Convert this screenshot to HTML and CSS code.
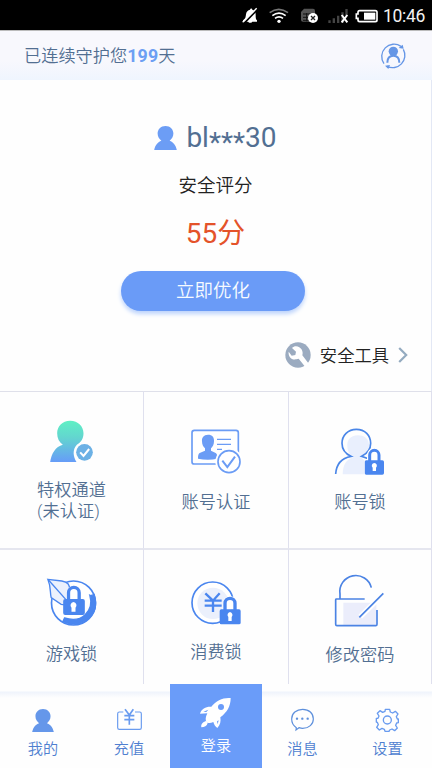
FILE: index.html
```html
<!DOCTYPE html>
<html lang="zh-CN">
<head>
<meta charset="utf-8">
<title>安全中心</title>
<link rel="stylesheet" href="styles.css">
</head>
<body>
<svg class="defs" width="0" height="0" aria-hidden="true">
  <defs>
    <linearGradient id="mint" x1="0" y1="0" x2="0" y2="1"><stop offset="0" stop-color="#5ff0c4"/><stop offset=".4" stop-color="#63d6cf"/><stop offset="1" stop-color="#669cf8"/></linearGradient>
    <symbol id="person" viewBox="0 0 66 70"><path d="M33 0C19 0 10 10 10 22c0 10 5 16 11 21C11 47 3 55 0 70h66c-3-15-11-23-21-27 6-5 11-11 11-21C56 10 47 0 33 0z"/></symbol>
    <symbol id="lock" viewBox="0 0 58 80"><path d="M15 38V20a14 14 0 0 1 28 0v18" fill="none" stroke="#4a86ef" stroke-width="9"/><rect y="36" width="58" height="43" rx="5" fill="#4a86ef"/><path d="M29 44a8 8 0 0 0-5 14v10h10V58a8 8 0 0 0-5-14z" fill="#fff"/></symbol>
  </defs>
</svg>
<header class="status">
  <svg class="status-icons" viewBox="30 0 420 90">
    <path d="M39 61c8-4 8-11 9-18 1-8 6-13 12-14 1-5 6-5 7 0 7 2 10 8 10 15 0 9 0 13 4 17v4H39zM54 65h13q-6 7-13 0z" fill="#fff"/><path d="M42 70 84 27" stroke="#000" stroke-width="5"/><path d="M38 67 80 25" stroke="#fff" stroke-width="4"/>
    <g fill="none" stroke-width="5"><path d="M119 38q27-20 55 0" stroke="#777"/><path d="M127 47q20-15 40 0M135 55q12-9 24 0" stroke="#fff"/></g><circle cx="147" cy="64" r="5" fill="#fff"/>
    <path d="M213 36l9-10h27q6 0 6 6v33h-36q-6 0-6-6z" fill="#555"/><path d="M219 42h27M219 52h27M219 61h20M230 39v25" stroke="#111" stroke-width="3"/><circle cx="249" cy="54" r="15" fill="#fff"/><path d="m243 48 12 12m0-12-12 12" stroke="#222" stroke-width="4"/>
    <path d="M295 61h7v8h-7zM308 55h7v14h-7zM321 47h7v22h-7zM334 37h7v32h-7zM346 27h7v20h-7z" fill="#444"/><path d="m335 45 17 22m0-22-17 22" stroke="#fff" stroke-width="6"/>
    <path d="M389 32h47q5 0 5 5v23q0 5-5 5h-47q-5 0-5-5v-5h-5V42h5v-5q0-5 5-5z" fill="none" stroke="#fff" stroke-width="5"/><path d="M402 38h34v21h-34z" fill="#fff"/>
  </svg>
  <span class="clock">10:46</span>
</header>
<section class="guard">
  <p>已连续守护您<b>199</b>天</p>
  <svg class="switch" viewBox="448 123 84 84">
    <g fill="none" stroke="#6596e6" stroke-width="4"><path d="M463 188A37 37 0 0 1 514 136"/><path d="M521 145A37 37 0 0 1 472 196"/><path d="M473 185c0-14 6-21 18-21s18 7 18 21" stroke-width="6"/></g>
    <circle cx="491" cy="151" r="14" fill="#6596e6"/><path d="m507 141 15 2-3-12zM481 192l-15 2 10 10z" fill="#6596e6"/>
  </svg>
</section>
<main class="score">
  <div class="user"><svg class="user-icon"><use href="#person"/></svg><span>bl<i>***</i>30</span></div>
  <div class="caption">安全评分</div>
  <div class="points">55分</div>
  <button class="optimize">立即优化</button>
  <div class="tools">
    <svg class="wrench" viewBox="44 37 78 78"><circle cx="83" cy="76" r="38" fill="#9babc0"/><path d="M65 55l12 11-2 10-11 2-9-12c-2 14 8 26 23 23l7-2 20 25 11-9-20-26c4-12-4-26-19-27-5 0-8 2-12 5z" fill="#fff"/></svg>
    <span>安全工具</span>
    <svg class="chevron" viewBox="0 0 10 16"><path d="m1.2 1 7 7-7 7" fill="none" stroke="#94abc0" stroke-width="2.2"/></svg>
  </div>
</main>
<section class="grid">
  <div class="cell cell-privilege">
    <svg class="icon" viewBox="136.5 90 156 168"><path fill="url(#mint)" d="M209 92c-24 0-39 17-39 38 0 15 6 27 17 34-22 6-34 26-38 52h79c-10-17-13-37 1-52 12-6 20-18 20-34 0-21-16-38-40-38z"/><circle cx="252" cy="187" r="25" fill="#6cb1e5"/><path d="m239 187 10 11 17-21" fill="none" stroke="#fff" stroke-width="6"/></svg>
    <span>特权通道<br>(未认证)</span>
  </div>
  <div class="cell">
    <svg class="icon" viewBox="138 90 156 168"><rect x="144" y="121" width="139" height="101" rx="7" fill="#fff" stroke="#6b9cf5" stroke-width="5"/><path d="M192 134c-13 0-19 9-18 20 0 10 4 17 9 21v7l-16 7c-4 2-5 8-5 17q30 6 58 0c0-10-1-15-5-17l-14-7v-7c5-4 9-11 9-21 1-12-5-20-18-20z" fill="#6b9cf5"/><path d="M219 148h42M219 163h42M219 178h15" stroke="#6b9cf5" stroke-width="4"/><circle cx="255" cy="215" r="41" fill="#fff"/><circle cx="255" cy="215" r="33" fill="#fff" stroke="#6b9cf5" stroke-width="5"/><path d="m235 212 15 19 23-31" fill="none" stroke="#6b9cf5" stroke-width="6"/></svg>
    <span>账号认证</span>
  </div>
  <div class="cell">
    <svg class="icon" viewBox="156 90 156 168"><path d="M228 136c-23 0-34 15-32 34 1 17 10 25 18 31-24 9-31 25-32 52h67v-40l-13-12c12-7 23-15 25-31 2-20-11-34-33-34z" fill="#e9effd"/><path d="M161 252c2-29 14-47 46-53-20-9-27-21-27-39 0-24 18-42 43-42 26 0 43 18 43 42 0 17-8 30-27 39l20 7" fill="none" stroke="#4a86e8" stroke-width="5"/><path d="M262 210v-15a14 14 0 0 1 28 0v15" fill="#fff" stroke="#fff" stroke-width="14"/><use href="#lock" x="248" y="175" width="58" height="80"/></svg>
    <span>账号锁</span>
  </div>
  <div class="cell cell-game">
    <svg class="icon" viewBox="136.5 93 156 156"><circle cx="219" cy="174" r="66" fill="#fff" stroke="#4a86ef" stroke-width="5"/><path d="M270 152 281 149c9 29 3 55-18 73-21 17-48 19-76 8l5-11c27 8 47 5 62-10 16-15 21-34 14-58z" fill="#4a86ef" stroke="#4a86ef" stroke-width="4"/><path d="m142 103 42 5c17 3 24 9 24 31l-6 42-20-3-30-20c-4-16 0-32-10-55z" fill="#ecf1fd" stroke="#4a86ef" stroke-width="4"/><path d="m144 105 55 62" stroke="#4a86ef" stroke-width="4"/><path d="M204 165v-20a15 15 0 0 1 31 0v20" fill="#fff" stroke="#fff" stroke-width="14"/><path d="M204 168v-25a15 15 0 0 1 32 0v25" fill="none" stroke="#4a86ef" stroke-width="10"/><rect x="188" y="162" width="65" height="48" rx="6" fill="#4a86ef"/><path d="M219 171a10 10 0 0 0-6 17v12h12v-12a10 10 0 0 0-6-17z" fill="#fff"/></svg>
    <span>游戏锁</span>
  </div>
  <div class="cell cell-spend">
    <svg class="icon" viewBox="138 93 156 156"><circle cx="206" cy="173" r="62" fill="#fff" stroke="#4a86ef" stroke-width="5"/><circle cx="207" cy="175" r="47" fill="#ebf0fc"/><path d="m184 145 23 22 20-22M207 166v35M182 167h51M182 182h51" fill="none" stroke="#4a86ef" stroke-width="7"/><path d="M243 194v-18a15 15 0 0 1 30 0v18" fill="#fff" stroke="#fff" stroke-width="15"/><path d="M243 197v-22a15 15 0 0 1 30 0v22" fill="none" stroke="#4a86ef" stroke-width="10"/><rect x="227" y="193" width="63" height="45" rx="5" fill="#4a86ef"/><path d="M258 201a9 9 0 0 0-5 15v12h10v-12a9 9 0 0 0-5-15z" fill="#fff"/></svg>
    <span>消费锁</span>
  </div>
  <div class="cell cell-password">
    <svg class="icon" viewBox="156 93 156 156"><path d="M184 173h99v67h-99z" fill="#ebedfb"/><path d="m235 215 67-66" stroke="#fff" stroke-width="16"/><path d="M248 162h-86q-1 0-1 2v74q0 4 4 4h116q4 0 4-4v-43M174 160v-13a48 48 0 0 1 94-19M232 217l72-72" fill="none" stroke="#4b83e4" stroke-width="5"/></svg>
    <span>修改密码</span>
  </div>
</section>
<nav class="tabs">
  <div class="tab"><svg class="tab-icon tab-person"><use href="#person"/></svg><span>我的</span></div>
  <div class="tab recharge"><svg class="tab-icon" viewBox="348 115 81 69"><path d="M370 127h-12q-5 0-5 5v42q0 5 5 5h61q5 0 5-5v-42q0-5-5-5h-14" fill="none" stroke="#699bef" stroke-width="3.5"/><path d="m375 119 13 17 12-17M388 136v29M373 138h30M373 150h30" fill="none" stroke="#699bef" stroke-width="5"/></svg><span>充值</span></div>
  <div class="tab login"><svg class="rocket" viewBox="600 81 96 96"><path d="M692 84c-23-2-43 7-58 26-16-1-29 5-34 21l22-1c-6 12-6 20-3 25 4 5 12 5 21 1 2 8 6 14 12 18 9-9 11-20 9-32 20-15 31-33 31-58zM617 153c-11 5-14 10-13 19 9 0 17-4 19-13z" fill="#fff"/><circle cx="663" cy="111" r="9" fill="#6a9cf9"/><path d="m610 125 15-6-6 7zM651 154l5-3-3 12z" fill="#6a9cf9"/></svg><span>登录</span></div>
  <div class="tab"><svg class="tab-icon" viewBox="865 115 81 69"><path d="M887 174c-9-6-14-15-14-26 0-17 14-29 33-29s32 12 32 29c0 16-13 28-32 28-4 0-8-1-11-2l-9 7z" fill="none" stroke="#5e90dc" stroke-width="3.5"/><g fill="#5e90dc"><circle cx="889" cy="147" r="3.5"/><circle cx="905" cy="147" r="3.5"/><circle cx="921" cy="147" r="3.5"/></g></svg><span>消息</span></div>
  <div class="tab"><svg class="tab-icon" viewBox="1124 115 81 69"><g fill="none" stroke="#699bef" stroke-width="4"><path d="M1158 119h13l2 8 7 3 8-5 8 8-5 8 3 7h3v11l-5 1-3 7 5 8-8 8-8-5-7 3-2 4h-12l-2-6-7-3-8 5-8-8 5-8-3-7-3-1v-11h5l3-7-5-8 8-8 8 5 7-3z" stroke-linejoin="round"/><circle cx="1164" cy="151" r="12"/></g></svg><span>设置</span></div>
</nav>
</body>
</html>
```

FILE: styles.css
```css
* { box-sizing: border-box; }
body {
  margin: 0;
  width: 432px;
  height: 768px;
  overflow: hidden;
  display: flex;
  flex-direction: column;
  background: #fefefe;
  color: #526f92;
  font-family: Roboto, "Noto Sans CJK SC", sans-serif;
}
svg { display: block; flex: none; overflow: visible; }
.defs { position: absolute; }
.status {
  height: 30px;
  flex: none;
  background: #000;
  display: flex;
  align-items: center;
  padding-left: 240px;
}
.status-icons { width: 140px; height: 30px; }
.clock { margin: 1px 0 0 3px; color: #f2f2f2; font-size: 17.5px; line-height: 30px; letter-spacing: -0.3px; }
.guard {
  height: 50px;
  flex: none;
  border-top: 1px solid #bbb;
  background: linear-gradient(#f8f8fd 60%, #eff5fe);
  display: flex;
  align-items: center;
  justify-content: space-between;
  padding: 0 25px 0 24px;
}
.guard p { margin: 0; font-size: 17.2px; font-weight: 350; line-height: 24px; }
.guard b { color: #6d9ff3; font-weight: 700; font-size: 17.8px; letter-spacing: 0.2px; }
.switch { width: 28px; height: 28px; }
.score {
  height: 311px;
  flex: none;
  background: #fefefe;
  border-right: 1px solid #e3e8f5;
  display: flex;
  flex-direction: column;
  align-items: center;
}
.user { display: flex; align-items: center; gap: 9px; height: 32px; margin-top: 42px; font-size: 28px; line-height: 32px; }
.user i { display: inline-block; font-style: normal; line-height: 20px; transform: translateY(5px); }
.user-icon { width: 23px; height: 24px; fill: #6c9df5; }
.caption { margin-top: 20px; height: 24px; line-height: 24px; font-size: 18.5px; color: #222; font-weight: 350; }
.points { margin-top: 18px; height: 36px; line-height: 36px; font-size: 28px; color: #e4532a; }
.optimize {
  flex: none;
  width: 184px;
  height: 40px;
  margin: 19px 5px 0 0;
  padding: 1px 0 0;
  border: 0;
  border-radius: 20px;
  background: #6a9bf7;
  box-shadow: 0 3px 4px #bcd3fc;
  color: #f8fbff;
  font: 350 18.5px/39px Roboto, "Noto Sans CJK SC", sans-serif;
}
.tools { align-self: flex-end; margin: 31px 23px 0 0; height: 26px; display: flex; align-items: center; font-size: 17.3px; font-weight: 350; line-height: 26px; color: #222; }
.tools span { padding-top: 1px; }
.wrench { width: 26px; height: 26px; margin-right: 9px; }
.chevron { width: 10px; height: 16px; margin-left: 9px; }
.grid {
  height: 293px;
  flex: none;
  display: grid;
  grid-template-columns: 144px 145px 143px;
  grid-template-rows: 157px 136px;
}
.cell {
  display: flex;
  flex-direction: column;
  align-items: center;
  border-top: 1px solid #dfe0ea;
  border-right: 1px solid #dfe0ee;
  padding-top: 28px;
  font-size: 17.2px;
  font-weight: 350;
  line-height: 20px;
}
.cell:nth-child(n+4) { border-top: 2px solid #e5e6ef; padding-top: 26px; }
.icon { width: 52px; height: 56px; }
.cell:nth-child(n+4) .icon { height: 52px; }
.cell span { margin-top: 16px; }
.cell-privilege span { margin-top: 4px; line-height: 21px; }
.cell-spend span { margin-top: 14px; }
.cell-password span { margin-top: 17px; }
.tabs {
  height: 84px;
  flex: none;
  display: grid;
  grid-template-columns: 86px 84px 92px 81px 89px;
  background: linear-gradient(#fefefe 7px, #eff4fc 8px, #f4f7fc 10px, #fefefe 14px);
}
.tab { padding-top: 24px; display: flex; flex-direction: column; align-items: center; font-size: 15.2px; font-weight: 350; line-height: 20px; color: #4f7fd0; }
.recharge { padding-left: 2px; }
.tab-icon { width: 27px; height: 23px; margin-bottom: 8px; }
.tab-person { width: 22px; margin-top: 1px; margin-bottom: 7px; fill: #6597ea; }
.login { padding-top: 13px; background: #6a9cf9; color: #fff; }
.rocket { width: 32px; height: 32px; margin-bottom: 7px; }
```
